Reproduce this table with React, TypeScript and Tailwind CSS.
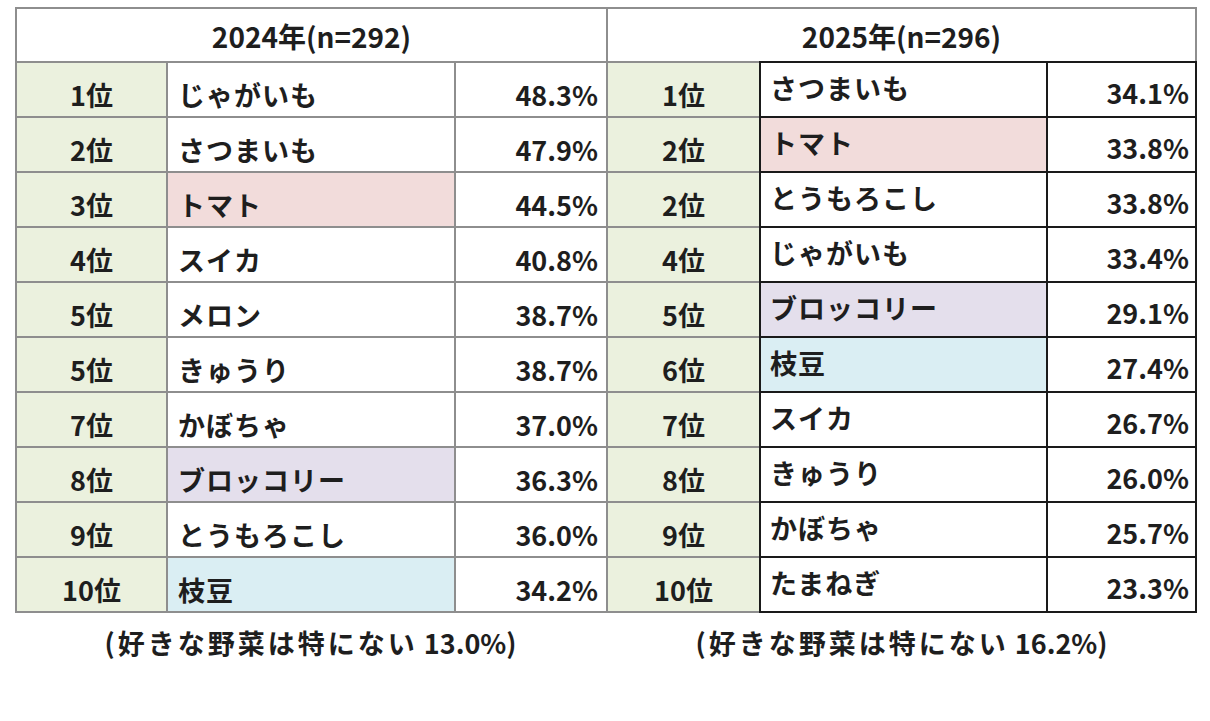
const rows2024 = [
  { rank: '1位', name: 'じゃがいも', pct: '48.3%', tint: '' },
  { rank: '2位', name: 'さつまいも', pct: '47.9%', tint: '' },
  { rank: '3位', name: 'トマト', pct: '44.5%', tint: 'bg-[#f2dcdb]' },
  { rank: '4位', name: 'スイカ', pct: '40.8%', tint: '' },
  { rank: '5位', name: 'メロン', pct: '38.7%', tint: '' },
  { rank: '5位', name: 'きゅうり', pct: '38.7%', tint: '' },
  { rank: '7位', name: 'かぼちゃ', pct: '37.0%', tint: '' },
  { rank: '8位', name: 'ブロッコリー', pct: '36.3%', tint: 'bg-[#e4dfec]' },
  { rank: '9位', name: 'とうもろこし', pct: '36.0%', tint: '' },
  { rank: '10位', name: '枝豆', pct: '34.2%', tint: 'bg-[#daeef3]' },
];

const rows2025 = [
  { rank: '1位', name: 'さつまいも', pct: '34.1%', tint: '' },
  { rank: '2位', name: 'トマト', pct: '33.8%', tint: 'bg-[#f2dcdb]' },
  { rank: '2位', name: 'とうもろこし', pct: '33.8%', tint: '' },
  { rank: '4位', name: 'じゃがいも', pct: '33.4%', tint: '' },
  { rank: '5位', name: 'ブロッコリー', pct: '29.1%', tint: 'bg-[#e4dfec]' },
  { rank: '6位', name: '枝豆', pct: '27.4%', tint: 'bg-[#daeef3]' },
  { rank: '7位', name: 'スイカ', pct: '26.7%', tint: '' },
  { rank: '8位', name: 'きゅうり', pct: '26.0%', tint: '' },
  { rank: '9位', name: 'かぼちゃ', pct: '25.7%', tint: '' },
  { rank: '10位', name: 'たまねぎ', pct: '23.3%', tint: '' },
];

export default function App() {
  return (
    <div className="min-h-[721px] w-[1210px] bg-white pl-[15px] pt-[7px] font-['Noto_Sans_CJK_JP',sans-serif] font-bold leading-none text-[#1e1e1e]">
      {/* ranking grid: 2024 on the left half, 2025 on the right half */}
      <div className="grid w-[1182px] grid-cols-[151px_288px_152px_153px_287px_151px] grid-rows-[54px_repeat(9,55px)_57px] text-[27px]">
        <div className="col-span-3 flex items-center justify-center border-l-2 border-t-2 border-[#8e8e8e] pt-[2px] text-[28px]">
          2024年(n=292)
        </div>
        <div className="col-span-3 flex items-center justify-center border-l-2 border-r-2 border-t-2 border-[#8e8e8e] pt-[2px] text-[28px]">
          2025年(n=296)
        </div>

        {rows2024.map((left, i) => {
          const right = rows2025[i];
          const last = i === rows2024.length - 1;
          return (
            <div key={i} className="contents">
              <div className={`flex items-center justify-center border-l-2 border-t-2 border-[#8e8e8e] bg-[#ebf1de] pt-[10px] ${last ? 'border-b-2' : ''}`}>
                {left.rank}
              </div>
              <div className={`flex items-center border-l-2 border-t-2 border-[#8e8e8e] pl-[10px] pt-[10px] tracking-[1px] ${left.tint} ${last ? 'border-b-2' : ''}`}>
                {left.name}
              </div>
              <div className={`flex items-center justify-end border-l-2 border-t-2 border-[#8e8e8e] pr-[8px] pt-[10px] ${last ? 'border-b-2' : ''}`}>
                {left.pct}
              </div>
              <div className={`flex items-center justify-center border-l-2 border-t-2 border-[#8e8e8e] bg-[#ebf1de] pt-[10px] ${last ? 'border-b-2' : ''}`}>
                {right.rank}
              </div>
              <div className={`flex items-center border-l-2 border-t-2 border-[#1a1a1a] pb-[4px] pl-[9px] tracking-[1px] ${right.tint} ${last ? 'border-b-2' : ''}`}>
                {right.name}
              </div>
              <div className={`flex items-center justify-end border-l-2 border-r-2 border-t-2 border-[#1a1a1a] pr-[6px] pt-[5px] ${last ? 'border-b-2' : ''}`}>
                {right.pct}
              </div>
            </div>
          );
        })}
      </div>

      {/* notes under each table */}
      <div className="mt-[16px] grid w-[1182px] grid-cols-2 text-[27px]">
        <p className="text-center">
          <span className="tracking-[3px]">(好きな野菜は特にない</span> 13.0%)
        </p>
        <p className="text-center">
          <span className="tracking-[3px]">(好きな野菜は特にない</span> 16.2%)
        </p>
      </div>
    </div>
  );
}
